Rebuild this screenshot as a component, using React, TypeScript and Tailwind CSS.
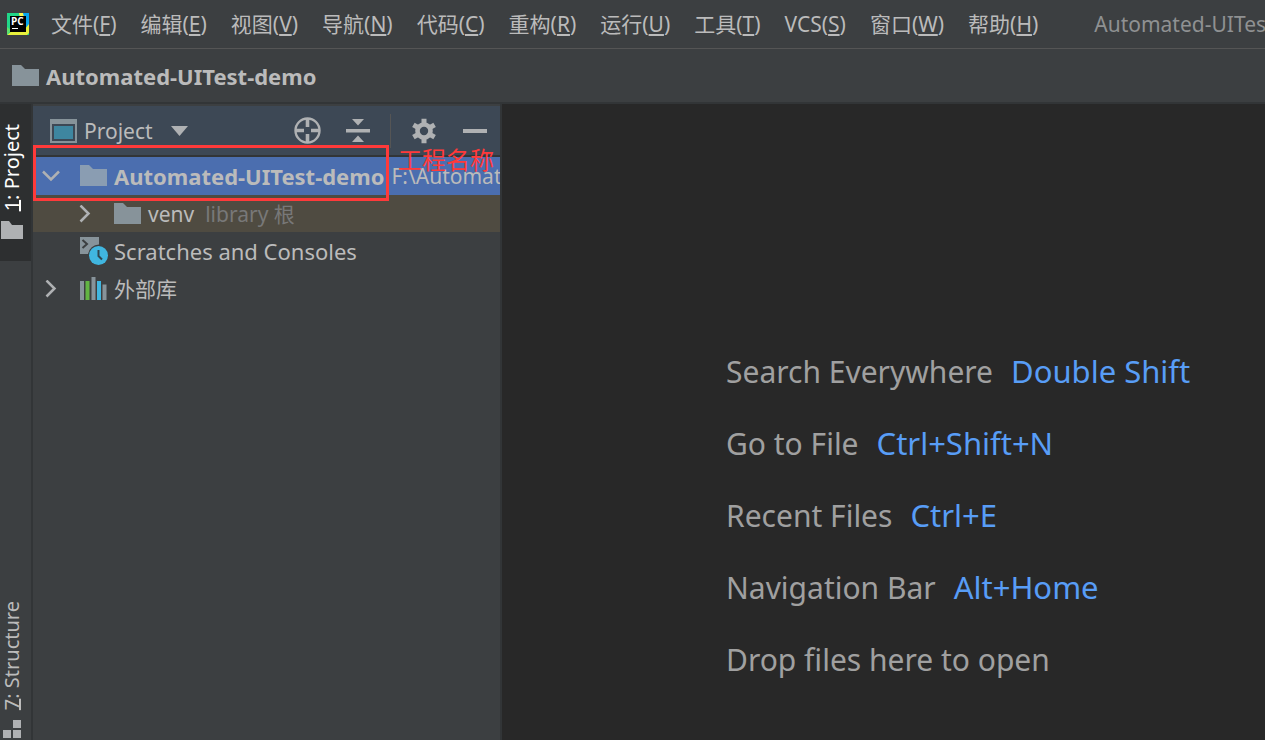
import type { ReactNode } from "react";

interface MenuItem {
  label: string;
  mnemonic: string;
}

interface Tip {
  action: string;
  shortcut?: string;
}

const menuItems: MenuItem[] = [
  { label: "文件", mnemonic: "F" },
  { label: "编辑", mnemonic: "E" },
  { label: "视图", mnemonic: "V" },
  { label: "导航", mnemonic: "N" },
  { label: "代码", mnemonic: "C" },
  { label: "重构", mnemonic: "R" },
  { label: "运行", mnemonic: "U" },
  { label: "工具", mnemonic: "T" },
  { label: "VCS", mnemonic: "S" },
  { label: "窗口", mnemonic: "W" },
  { label: "帮助", mnemonic: "H" },
];

const tips: Tip[] = [
  { action: "Search Everywhere", shortcut: "Double Shift" },
  { action: "Go to File", shortcut: "Ctrl+Shift+N" },
  { action: "Recent Files", shortcut: "Ctrl+E" },
  { action: "Navigation Bar", shortcut: "Alt+Home" },
  { action: "Drop files here to open" },
];

function Logo() {
  return (
    <svg className="size-[22px] shrink-0" viewBox="0 0 22 22" aria-hidden="true">
      <rect width="22" height="22" fill="#21d789" />
      <path d="M12 0h4l3 4-6 1z" fill="#fcf84a" />
      <path d="M16 0h6v14l-4 2-1-12z" fill="#07a5ef" />
      <path d="M0 22l6-5h11l5-6v9l-2 2z" fill="#e8f03c" />
      <path d="M0 14l4 3-4 5z" fill="#5fe06b" />
      <rect x="3" y="3" width="16" height="16" fill="#000" />
      <text x="4" y="12" fill="#fff" fontSize="10" fontWeight="700" fontFamily="Open Sans, sans-serif">
        PC
      </text>
      <rect x="5" y="15" width="6" height="1" fill="#fff" />
    </svg>
  );
}

function FolderIcon({ className = "fill-[#87939a]" }: { className?: string }) {
  return (
    <svg className={`h-[22px] w-[27px] shrink-0 ${className}`} viewBox="0 0 27 22" aria-hidden="true">
      <path d="M0 0h9l4 4h14v17H0z" />
    </svg>
  );
}

function Chevron({ open = false }: { open?: boolean }) {
  return (
    <svg
      className="size-[18px] shrink-0 fill-none stroke-[#afb1b3] stroke-[2.5]"
      viewBox="0 0 18 18"
      aria-hidden="true"
    >
      {open ? <path d="M1 4.5l8 8 8-8" /> : <path d="M4.5 0.5l8 8-8 8" />}
    </svg>
  );
}

function ProjectViewIcon() {
  return (
    <svg className="h-6 w-[27px] shrink-0" viewBox="0 0 27 24" aria-hidden="true">
      <path d="M0 0h27v24H0zM2 5v17h23V5z" fill="#87939a" fillRule="evenodd" />
      <rect x="4" y="7" width="19" height="13" fill="#3e86a0" />
    </svg>
  );
}

function ScratchesIcon() {
  return (
    <svg className="size-7 shrink-0" viewBox="0 0 28 28" aria-hidden="true">
      <path d="M0 0h19v7.5A11 11 0 0 0 8 17H0z" fill="#87939a" />
      <path d="M2.5 3L7 7l-4.5 4" fill="none" stroke="#3c3f41" strokeWidth="2" />
      <circle cx="18.5" cy="18.5" r="9.5" fill="#40b6e0" />
      <path d="M18.5 13v6l3.5 3.5" fill="none" stroke="#2f4650" strokeWidth="2" />
    </svg>
  );
}

function LibraryIcon() {
  return (
    <svg className="h-6 w-[27px] shrink-0" viewBox="0 0 27 24" aria-hidden="true">
      <rect x="0" y="4" width="4" height="19" fill="#87939a" />
      <rect x="5.5" y="4" width="4" height="19" fill="#62b543" />
      <rect x="11.5" y="0" width="4" height="23" fill="#87939a" />
      <rect x="17" y="4" width="4" height="19" fill="#40b6e0" />
      <rect x="22.5" y="7.5" width="4" height="15.5" fill="#87939a" />
    </svg>
  );
}

function LocateIcon() {
  return (
    <svg className="size-[27px]" viewBox="0 0 27 27" fill="none" stroke="#afb1b3" aria-hidden="true">
      <circle cx="13.5" cy="13.5" r="12" strokeWidth="2.4" />
      <path d="M13.5 2v8M13.5 17v8M2 13.5h8M17 13.5h8" strokeWidth="3.6" />
    </svg>
  );
}

function CollapseIcon() {
  return (
    <svg className="h-[27px] w-6" viewBox="0 0 24 27" fill="#afb1b3" aria-hidden="true">
      <path d="M6 2h12l-6 6.500zM0 12h24v3.500H0zM6 25h12l-6-6.500z" />
    </svg>
  );
}

function GearIcon() {
  return (
    <svg className="size-[26px]" viewBox="0 0 26 26" fill="none" stroke="#afb1b3" aria-hidden="true">
      <circle cx="13" cy="13" r="6.5" strokeWidth="4.6" />
      <path
        d="M13 .8v4.500M13 20.700v4.500M2.400 6.900l4 2.300M19.600 16.800l4 2.300M2.400 19.100l4-2.300M19.600 9.200l4-2.300"
        strokeWidth="5"
      />
    </svg>
  );
}

function MenuBar() {
  return (
    <header className="flex h-[49px] items-center overflow-hidden border-b border-[#555555] pl-[7px] whitespace-nowrap">
      <Logo />
      <nav className="ml-[22px] flex gap-6">
        {menuItems.map((item) => (
          <button key={item.mnemonic}>
            {item.label}(<u className="underline-offset-2">{item.mnemonic}</u>)
          </button>
        ))}
      </nav>
      <span className="ml-14 text-[#8f9192]">Automated-UITest-demo</span>
    </header>
  );
}

function StripeButton({ num, label, active = false, icon }: {
  num: string;
  label: string;
  active?: boolean;
  icon: ReactNode;
}) {
  return (
    <button
      className={`flex w-full flex-col items-center gap-[10px] pr-2 text-xl leading-6 ${
        active ? "h-[157px] bg-[#2d2f30] pt-5 text-white" : "text-[#bbbbbb]"
      }`}
    >
      <span className="rotate-180 whitespace-nowrap [writing-mode:vertical-rl]">
        <u className="underline-offset-[-3px]">{num}</u>: {label}
      </span>
      {icon}
    </button>
  );
}

function ToolStripe() {
  return (
    <aside className="flex w-[33px] shrink-0 flex-col justify-between border-r-2 border-[#323537]">
      <StripeButton
        num="1"
        label="Project"
        active
        icon={
          <svg className="h-[18px] w-[22px] shrink-0 fill-[#afb1b3]" viewBox="0 0 22 18" aria-hidden="true">
            <path d="M0 0h8l3 4h11v14H0z" />
          </svg>
        }
      />
      <StripeButton
        num="7"
        label="Structure"
        icon={
          <svg className="h-5 w-[18px] fill-[#afb1b3]" viewBox="0 0 18 20" aria-hidden="true">
            <path d="M10 0h8v8h-8zM0 10h8v8H0zM10 10h8v8h-8z" />
          </svg>
        }
      />
    </aside>
  );
}

function PanelHeader() {
  return (
    <div className="flex h-[51px] items-center border-b-2 border-[#323537] bg-[#3d4855] pr-[13px] pl-[17px]">
      <button className="flex items-center">
        <ProjectViewIcon />
        <span className="ml-[7px]">Project</span>
        <svg className="ml-[18px] h-[10px] w-[17px] fill-[#afb1b3]" viewBox="0 0 17 10" aria-hidden="true">
          <path d="M0 0h17l-8.500 10z" />
        </svg>
      </button>
      <div className="ml-auto flex items-center">
        <button aria-label="Locate">
          <LocateIcon />
        </button>
        <button aria-label="Collapse all" className="ml-[25px]">
          <CollapseIcon />
        </button>
        <div className="mx-5 h-[34px] w-px bg-[#555555]" />
        <button aria-label="Settings">
          <GearIcon />
        </button>
        <button aria-label="Hide" className="ml-[26px]">
          <svg className="h-1 w-6" viewBox="0 0 24 4" aria-hidden="true">
            <rect width="24" height="4" fill="#afb1b3" />
          </svg>
        </button>
      </div>
    </div>
  );
}

function ProjectTree() {
  return (
    <ul className="whitespace-nowrap">
      <li className="flex h-[38px] items-center overflow-hidden bg-[#4b6eaf] pl-[9px]">
        <Chevron open />
        <div className="ml-5 flex items-center gap-[7px]">
          <FolderIcon className="fill-[#8a9db2]" />
          <span className="text-[22px] font-bold">Automated-UITest-demo</span>
        </div>
        <span className="ml-[7px]">F:\Automated-UITest-demo</span>
      </li>
      <li className="flex h-[37px] items-center bg-[#4f4b41] pl-[43px]">
        <Chevron />
        <div className="ml-5 flex items-center gap-[7px]">
          <FolderIcon />
          <span>venv</span>
        </div>
        <span className="ml-[11px] text-[#787878]">library 根</span>
      </li>
      <li className="flex h-[38px] items-center gap-[6px] pl-[47px]">
        <ScratchesIcon />
        <span className="text-[22px]">Scratches and Consoles</span>
      </li>
      <li className="flex h-[38px] items-center pl-[9px]">
        <Chevron />
        <div className="ml-5 flex items-center gap-[7px]">
          <LibraryIcon />
          <span>外部库</span>
        </div>
      </li>
    </ul>
  );
}

function ProjectPanel() {
  return (
    <section className="relative w-[469px] shrink-0 border-r-2 border-[#323537] pt-[2px]">
      <PanelHeader />
      <ProjectTree />
      {/* callout around the project root */}
      <div className="absolute top-[41px] left-0 h-[56px] w-[356px] border-3 border-[#ff3a3a]" />
      <span className="absolute top-[40px] left-[365px] text-2xl leading-8 text-[#ff3a3a]">工程名称</span>
    </section>
  );
}

function EditorTips() {
  return (
    <main className="grow bg-[#282828] pt-[232px] pl-[224px] text-3xl whitespace-nowrap text-[#a0a0a0]">
      {tips.map((tip) => (
        <p key={tip.action} className="flex h-[72px] items-center gap-[18px]">
          {tip.action}
          {tip.shortcut && (
            <kbd className="font-[inherit] text-[31px] text-[#589df6]">{tip.shortcut}</kbd>
          )}
        </p>
      ))}
    </main>
  );
}

export default function App() {
  return (
    <div className="flex h-screen flex-col overflow-hidden bg-[#3c3f41] font-['Noto_Sans','Noto_Sans_CJK_SC',sans-serif] text-[21px] leading-7 text-[#bbbbbb]">
      <MenuBar />
      <div className="flex h-[55px] shrink-0 items-center gap-[7px] border-b-2 border-[#323537] pl-3 text-[22px] font-bold">
        <FolderIcon />
        <span>Automated-UITest-demo</span>
      </div>
      <div className="flex min-h-0 grow">
        <ToolStripe />
        <ProjectPanel />
        <EditorTips />
      </div>
    </div>
  );
}
